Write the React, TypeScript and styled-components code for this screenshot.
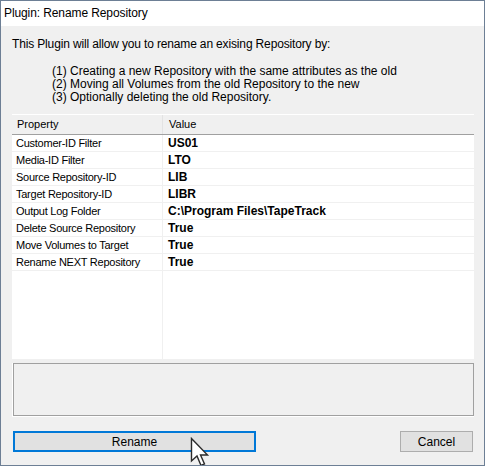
import React from "react";
import styled, { createGlobalStyle } from "styled-components";

const Global = createGlobalStyle`
  html, body { margin: 0; padding: 0; background: #ffffff; }
  * { box-sizing: border-box; }
`;

const Window = styled.div`
  position: relative;
  width: 485px;
  height: 466px;
  border: 1px solid #6d7f95;
  background: #f0f0f0;
  display: flex;
  flex-direction: column;
  overflow: hidden;
  font-family: "Liberation Sans", Arial, sans-serif;
  color: #000;
`;

const TitleBar = styled.div`
  height: 25px;
  background: #ffffff;
  padding-left: 3px;
  font-size: 12px;
  line-height: 25px;
  letter-spacing: -0.1px;
`;

const Body = styled.div`
  flex: 1;
  display: flex;
  flex-direction: column;
  padding: 11px 10px 11px 11px;
`;

const Intro = styled.div`
  font-size: 12px;
  line-height: 14px;
  letter-spacing: -0.15px;
`;

const Steps = styled.div`
  margin-top: 14px;
  padding-left: 40px;
  font-size: 12px;
  line-height: 13px;
`;

const Grid = styled.div`
  margin-top: 10px;
  height: 245px;
  background: #ffffff;
  display: flex;
  flex-direction: column;
  font-size: 11px;
`;

const HeaderRow = styled.div`
  display: grid;
  grid-template-columns: 151px 1fr;
  height: 21px;
  background: #f0f0f0;
  border-top: 1px solid #ffffff;
  border-bottom: 1px solid #a0a0a0;
`;

const HeaderCell = styled.div<{ $first?: boolean }>`
  padding-left: ${(p) => (p.$first ? 5 : 6)}px;
  line-height: 19px;
  border-right: ${(p) => (p.$first ? "1px solid #e3e3e3" : "none")};
  color: #000;
`;

const Row = styled.div`
  display: grid;
  grid-template-columns: 151px 1fr;
  height: 17px;
  border-bottom: 1px solid #f0f0f0;
`;

const Cell = styled.div<{ $first?: boolean; $bold?: boolean }>`
  padding-left: ${(p) => (p.$first ? 4 : 5)}px;
  line-height: 16px;
  font-size: ${(p) => (p.$bold ? 12 : 11)}px;
  font-weight: ${(p) => (p.$bold ? 700 : 400)};
  letter-spacing: ${(p) => (p.$bold ? "0" : "-0.25px")};
  border-right: ${(p) => (p.$first ? "1px solid #f0f0f0" : "none")};
  white-space: nowrap;
`;

const Filler = styled.div`
  flex: 1;
  display: grid;
  grid-template-columns: 151px 1fr;
`;

const StatusOuter = styled.div`
  margin-top: 4px;
  height: 54px;
  border-left: 1px solid #ffffff;
  border-bottom: 1px solid #ffffff;
  display: flex;
`;

const StatusBox = styled.div`
  flex: 1;
  border: 1px solid #a0a0a0;
  background: #f0f0f0;
`;

const ButtonRow = styled.div`
  margin-top: 14px;
  display: flex;
  justify-content: space-between;
  padding-left: 1px;
  padding-right: 1px;
`;

const Button = styled.div<{ $primary?: boolean; $width: number }>`
  width: ${(p) => p.$width}px;
  height: 21px;
  background: #e1e1e1;
  border: ${(p) => (p.$primary ? "2px solid #0078d7" : "1px solid #adadad")};
  font-size: 12px;
  display: flex;
  align-items: center;
  justify-content: center;
`;

const Cursor = styled.svg`
  position: absolute;
  left: 189px;
  top: 436px;
`;

const rows: [string, string][] = [
  ["Customer-ID Filter", "US01"],
  ["Media-ID Filter", "LTO"],
  ["Source Repository-ID", "LIB"],
  ["Target Repository-ID", "LIBR"],
  ["Output Log Folder", "C:\\Program Files\\TapeTrack"],
  ["Delete Source Repository", "True"],
  ["Move Volumes to Target", "True"],
  ["Rename NEXT Repository", "True"],
];

export default function App() {
  return (
    <>
      <Global />
      <Window>
        <TitleBar>Plugin: Rename Repository</TitleBar>
        <Body>
          <Intro>This Plugin will allow you to rename an exising Repository by:</Intro>
          <Steps>
            <div>(1) Creating a new Repository with the same attributes as the old</div>
            <div>(2) Moving all Volumes from the old Repository to the new</div>
            <div>(3) Optionally deleting the old Repository.</div>
          </Steps>
          <Grid>
            <HeaderRow>
              <HeaderCell $first>Property</HeaderCell>
              <HeaderCell>Value</HeaderCell>
            </HeaderRow>
            {rows.map(([k, v]) => (
              <Row key={k}>
                <Cell $first>{k}</Cell>
                <Cell $bold>{v}</Cell>
              </Row>
            ))}
            <Filler>
              <Cell $first />
              <Cell />
            </Filler>
          </Grid>
          <StatusOuter>
            <StatusBox />
          </StatusOuter>
          <ButtonRow>
            <Button $primary $width={243}>Rename</Button>
            <Button $width={73}>Cancel</Button>
          </ButtonRow>
        </Body>
        <Cursor width="20" height="31" viewBox="0 0 20 31">
          <path
            d="M1.5 1.5 L1.5 24 L7 19 L11 28.5 L14.5 27 L10.5 18 L17.5 18 Z"
            fill="#ffffff"
            stroke="#2b2b2b"
            strokeWidth="1.4"
            strokeLinejoin="miter"
          />
        </Cursor>
      </Window>
    </>
  );
}
